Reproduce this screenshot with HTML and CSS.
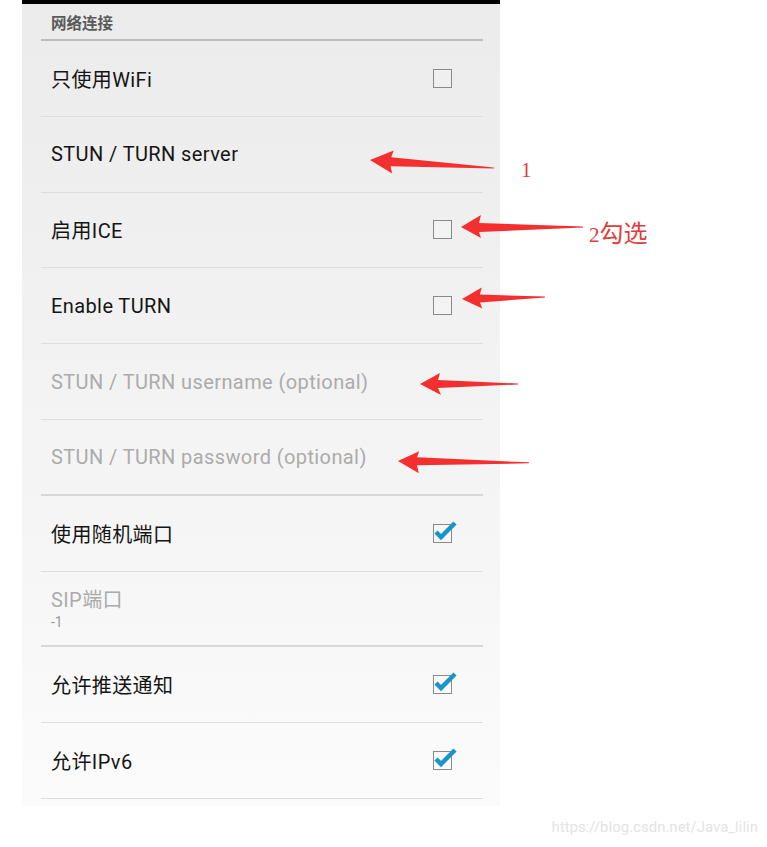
FILE: index.html
```html
<!DOCTYPE html>
<html lang="zh-CN">
<head>
    <meta charset="UTF-8">
    <title>网络连接</title>
<link rel="stylesheet" href="styles.css">
</head>
<body>
    <div class="page">
        <div class="phone">
            <div class="status"></div>
            <div class="category">网络连接</div>

            <div class="pref">
                <span class="title">只使用WiFi</span>
                <span class="check"></span>
            </div>
            <div class="pref">
                <span class="title">STUN / TURN server</span>
            </div>
            <div class="pref">
                <span class="title">启用ICE</span>
                <span class="check"></span>
            </div>
            <div class="pref">
                <span class="title">Enable TURN</span>
                <span class="check"></span>
            </div>
            <div class="pref disabled">
                <span class="title">STUN / TURN username (optional)</span>
            </div>
            <div class="pref disabled end">
                <span class="title">STUN / TURN password (optional)</span>
            </div>
            <div class="pref">
                <span class="title">使用随机端口</span>
                <span class="check on"><svg viewBox="0 0 26 24" width="26" height="24"><polyline points="3,12 8,17 22,3" /></svg></span>
            </div>
            <div class="pref disabled end">
                <div class="text">
                    <span class="title">SIP端口</span>
                    <span class="summary">-1</span>
                </div>
            </div>
            <div class="pref">
                <span class="title">允许推送通知</span>
                <span class="check on"><svg viewBox="0 0 26 24" width="26" height="24"><polyline points="3,12 8,17 22,3" /></svg></span>
            </div>
            <div class="pref">
                <span class="title">允许IPv6</span>
                <span class="check on"><svg viewBox="0 0 26 24" width="26" height="24"><polyline points="3,12 8,17 22,3" /></svg></span>
            </div>
        </div>

        <!-- annotations drawn over the screenshot -->
        <svg class="marks" width="767" height="847" viewBox="0 0 767 847">
            <g transform="translate(370,160) rotate(3.7)">
                <polygon points="0,0 23,-11 21,-4 124,-0.5 124,0.5 21,5 23,12" />
            </g>
            <g transform="translate(461,227)">
                <polygon points="0,0 20,-12 18,-4 122,-0.5 122,0.5 18,5 20,11" />
            </g>
            <g transform="translate(462,299) rotate(-1.4)">
                <polygon points="0,0 20,-11 18,-4 83,-0.5 83,0.5 18,4 20,10" />
            </g>
            <g transform="translate(420,384)">
                <polygon points="0,0 20,-11 18,-4 98,-0.5 98,0.5 18,4 21,11" />
            </g>
            <g transform="translate(398,461) rotate(0.8)">
                <polygon points="0,0 21,-10 19,-4 131,-0.5 131,0.5 19,4 21,12" />
            </g>
        </svg>
        <span class="note note-1">1</span>
        <span class="note note-2">2<span class="cjk">勾选</span></span>
        <span class="watermark">https://blog.csdn.net/Java_lilin</span>
    </div>
</body>
</html>
```

FILE: styles.css
```css
* {
    box-sizing: border-box;
}

body {
    margin: 0;
    background-color: #fff;
    font-family: Roboto, "Noto Sans CJK SC", sans-serif;
}

.page {
    position: relative;
    width: 767px;
    height: 847px;
}

.phone {
    margin-left: 22px;
    width: 478px;
    padding-bottom: 7px;
    background: linear-gradient(#ebebeb, #f3f3f3 50%, #fbfbfb);
}

.status {
    height: 4px;
    background-color: #000;
}

.category {
    height: 37px;
    margin: 0 17px 0 19px;
    padding: 11px 0 0 10px;
    border-bottom: 2px solid #bdbdbd;
    font-size: 15.5px;
    font-weight: bold;
    color: #5a5a5a;
    line-height: 18px;
}

.pref {
    display: flex;
    align-items: center;
    justify-content: space-between;
    height: 75.8px;
    margin: 0 17px 0 19px;
    padding: 0 31px 0 10px;
    border-bottom: 1px solid #dedede;
}

.pref.end {
    border-bottom: 2px solid #d8d8d8;
}

.title {
    font-size: 20px;
    letter-spacing: 0.4px;
    color: #151515;
}

.disabled .title {
    color: #ababab;
}

.text {
    display: flex;
    flex-direction: column;
    margin-top: -3px;
}

.summary {
    font-size: 14px;
    color: #9a9a9a;
    margin-top: 1px;
}

.check {
    position: relative;
    width: 19px;
    height: 19px;
    border: 1.5px solid #8a8a8a;
    background-color: rgba(255, 255, 255, 0.2);
}

.check svg {
    position: absolute;
    left: -1px;
    top: -5px;
}

.check polyline {
    fill: none;
    stroke: #1a95cb;
    stroke-width: 4.5px;
}

.marks {
    position: absolute;
    left: 0;
    top: 0;
}

.marks polygon {
    fill: #f42f2f;
}

.note {
    position: absolute;
    font-family: "Liberation Serif", "Noto Sans CJK SC", serif;
    color: #e23b3b;
    font-size: 21px;
}

.note .cjk {
    font-size: 24px;
}

.note-1 {
    left: 521px;
    top: 158px;
}

.note-2 {
    left: 589px;
    top: 214px;
}

.watermark {
    position: absolute;
    right: 9px;
    top: 818px;
    font-family: Roboto, sans-serif;
    font-size: 15px;
    color: #e4e4e4;
}
```
